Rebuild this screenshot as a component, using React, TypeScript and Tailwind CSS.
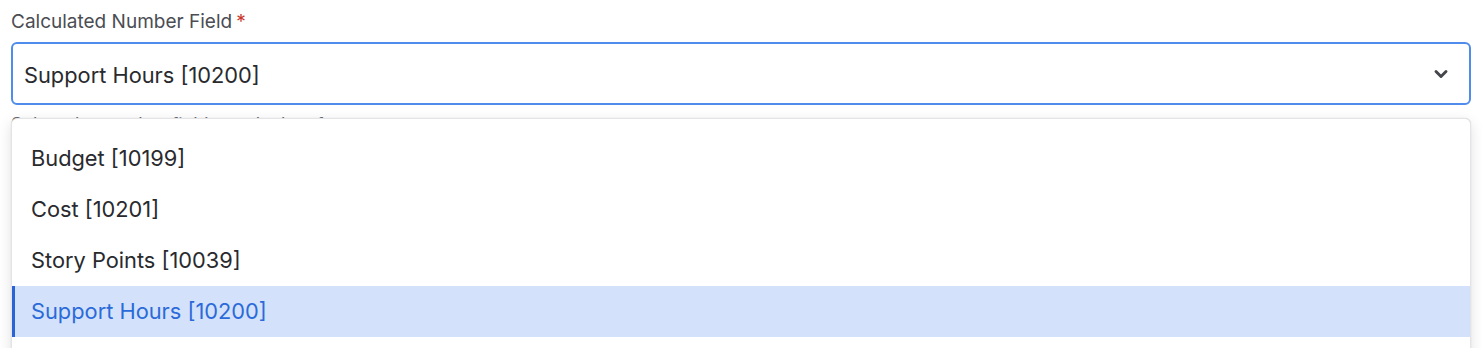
import { ChevronDown } from 'lucide-react';

const options = [
  { label: 'Budget [10199]', selected: false },
  { label: 'Cost [10201]', selected: false },
  { label: 'Story Points [10039]', selected: false },
  { label: 'Support Hours [10200]', selected: true },
];

export default function App() {
  return (
    <div className="w-[1482px] h-[348px] overflow-hidden bg-white px-[11px] pt-[10px] font-['Inter',sans-serif]">
      <label className="flex items-center h-[24px] text-[19px] text-[#4b4d53]">
        Calculated Number Field
        <span className="ml-[4px] text-[#c9372c]">*</span>
      </label>

      <div className="relative mt-[8px]">
        <div className="flex items-center justify-between h-[63px] border-2 border-[#4f8ceb] rounded-[6px] pl-[11px] pr-[18px]">
          <span className="text-[21.8px] leading-[28px] pt-[2px] text-[#292a2e]">Support Hours [10200]</span>
          <ChevronDown className="w-[20px] h-[20px] text-[#44464b]" strokeWidth={3.5} />
        </div>

        <p className="mt-[9px] text-[18px] leading-[22px] text-[#6b6e76]">
          Select the number field to calculate from
        </p>

        {/* Open listbox */}
        <div className="absolute left-0 right-0 top-[76px] h-[300px] bg-white rounded-[6px] border border-[#e4e4e6] shadow-[0_4px_14px_rgba(0,0,0,0.12),0_0_1px_rgba(0,0,0,0.2)] pt-[14px]">
          {options.map((o) => (
            <div
              key={o.label}
              className={
                o.selected
                  ? 'flex items-center h-[51px] pl-[16px] border-l-[3px] border-[#2a63d6] bg-[#d3e2fa] text-[21.8px] text-[#2b6ad9]'
                  : 'flex items-center h-[51px] pl-[19px] text-[21.8px] text-[#292a2e]'
              }
            >
              {o.label}
            </div>
          ))}
        </div>
      </div>
    </div>
  );
}
